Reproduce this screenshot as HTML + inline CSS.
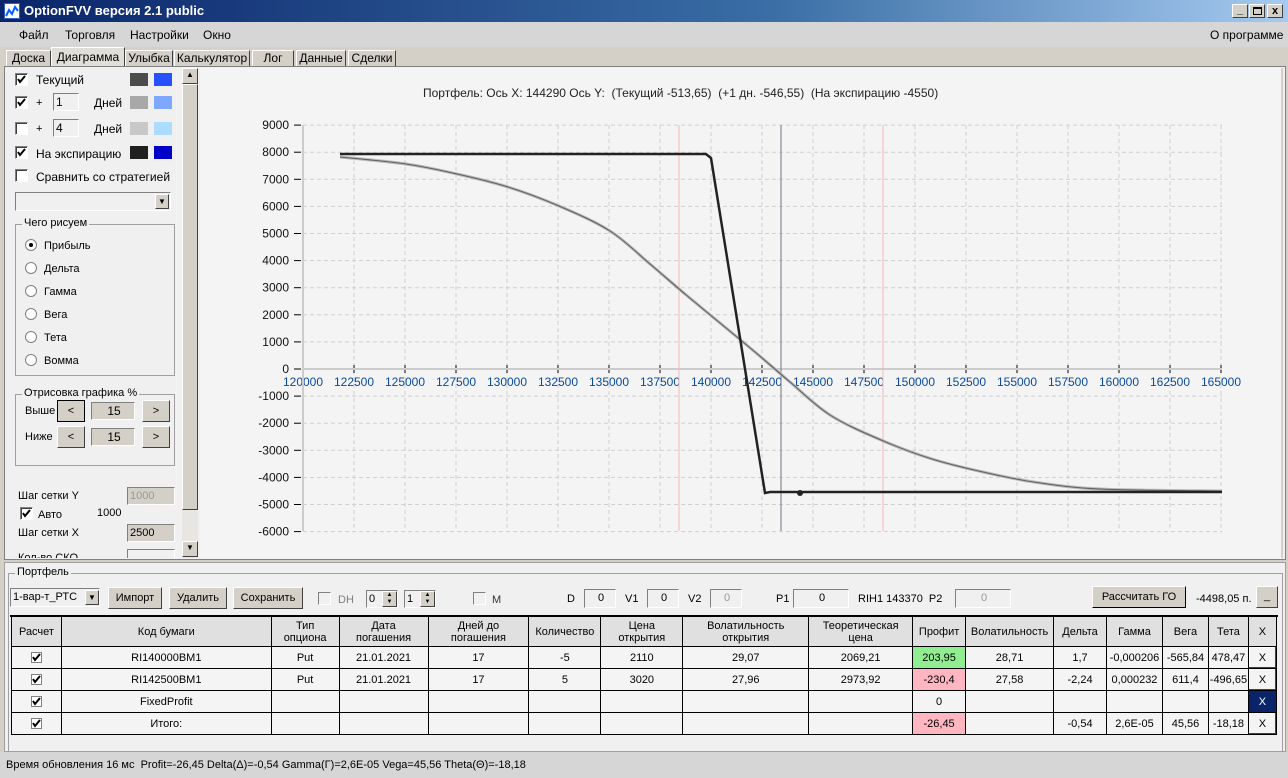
<!DOCTYPE html>
<html><head><meta charset="utf-8">
<style>
*{box-sizing:border-box;margin:0;padding:0}
body{width:1288px;height:778px;overflow:hidden;background:#d4d0c8;font-family:"Liberation Sans",sans-serif;font-size:11px;color:#000;position:relative}
.a{position:absolute}
.title{left:0;top:0;width:1288px;height:22px;background:linear-gradient(90deg,#0a246a,#3a6ea5 60%,#a6caf0);color:#fff;font-weight:bold;font-size:13px;line-height:22px;padding-left:24px}
.menu{left:0;top:22px;width:1288px;height:25px;background:#d6d6d6}
.menu span{position:absolute;top:6px;font-size:12px}
.tab{position:absolute;top:50px;height:17px;background:#d4d0c8;border:1px solid #fff;border-right-color:#404040;border-bottom:none;font-size:12px;text-align:center;line-height:15px}
.btn{position:absolute;background:#d4d0c8;border:1px solid;border-color:#fff #404040 #404040 #fff;text-align:center;font-size:11px}
.inp{position:absolute;background:#f0f0f0;border:1px solid;border-color:#808080 #fff #fff #808080;font-size:11px;padding-left:2px;line-height:16px}
.cb{position:absolute;width:13px;height:13px;background:#fff;border:1px solid;border-color:#808080 #fff #fff #808080;box-shadow:inset 1px 1px #404040}
.cb svg{position:absolute;left:1px;top:1px}
.rd{position:absolute;width:12px;height:12px;border-radius:50%;background:#fff;border:1px solid #808080}
.sw{position:absolute;width:18px;height:13px}
.grp{position:absolute;border:1px solid #a0a0a0}
.grp>b{position:absolute;top:-8px;left:6px;background:#f0f0f0;font-weight:normal;padding:0 2px}
table{border-collapse:collapse;font-size:11px}
td{border:1px solid #000;text-align:center;height:22px;padding:0}
.tc{display:inline-block;width:11px;height:11px;border:1px solid #808080;background:#fff;vertical-align:middle;position:relative}
</style></head><body>
<div class="a title">OptionFVV версия 2.1 public</div>
<div class="a" style="left:4px;top:3px;width:16px;height:16px;background:#fff;border:1px solid #3060c0"><svg width="14" height="14"><polyline points="1,12 4,6 7,10 10,3 13,7" fill="none" stroke="#0060ff" stroke-width="2"/></svg></div>
<div class="btn" style="left:1232px;top:4px;width:16px;height:14px;line-height:10px;font-weight:bold">_</div>
<div class="btn" style="left:1249px;top:4px;width:16px;height:14px"><div class="a" style="left:3px;top:2px;width:9px;height:8px;border:1px solid #000;border-top-width:2px"></div></div>
<div class="btn" style="left:1267px;top:4px;width:16px;height:14px;font-weight:bold;line-height:12px">x</div>
<div class="a menu"><span style="left:19px">Файл</span><span style="left:65px">Торговля</span><span style="left:130px">Настройки</span><span style="left:203px">Окно</span><span style="left:1210px">О программе</span></div>
<div class="tab" style="left:6px;width:45px">Доска</div>
<div class="tab" style="left:51px;top:47px;height:20px;width:74px;background:#e0ded8;line-height:18px">Диаграмма</div>
<div class="tab" style="left:125px;width:48px">Улыбка</div>
<div class="tab" style="left:174px;width:76px">Калькулятор</div>
<div class="tab" style="left:252px;width:42px">Лог</div>
<div class="tab" style="left:296px;width:50px">Данные</div>
<div class="tab" style="left:348px;width:48px">Сделки</div>
<div class="a" style="left:4px;top:66px;width:1282px;height:494px;background:#f0f0f0;border:1px solid #808080"></div>
<div class="a" style="left:9px;top:68px;width:173px;height:490px;background:#f0f0f0"></div>
<div class="a" style="left:182px;top:68px;width:16px;height:490px;background:#e8e6e0"></div>
<div class="btn" style="left:182px;top:68px;width:16px;height:16px;font-size:8px;line-height:12px">▲</div>
<div class="a" style="left:182px;top:84px;width:16px;height:426px;background:#d4d0c8;border:1px solid;border-color:#fff #404040 #404040 #fff"></div>
<div class="btn" style="left:182px;top:541px;width:16px;height:16px;font-size:8px;line-height:12px">▼</div>
<div class="cb" style="left:15px;top:73px"><svg width="9" height="9"><polyline points="1,4 3,7 8,1" fill="none" stroke="#000" stroke-width="2"/></svg></div><div class="a" style="left:36px;top:73px;font-size:12px">Текущий</div>
<div class="sw" style="left:130px;top:73px;background:#4c4c4c"></div><div class="sw" style="left:154px;top:73px;background:#2850ff"></div>
<div class="cb" style="left:15px;top:96px"><svg width="9" height="9"><polyline points="1,4 3,7 8,1" fill="none" stroke="#000" stroke-width="2"/></svg></div><div class="a" style="left:36px;top:97px">+</div><div class="inp" style="left:53px;top:93px;width:26px;height:18px;font-size:12px">1</div><div class="a" style="left:94px;top:96px;font-size:12px">Дней</div>
<div class="sw" style="left:130px;top:96px;background:#a8a8a8"></div><div class="sw" style="left:154px;top:96px;background:#7ea8ff"></div>
<div class="cb" style="left:15px;top:122px"></div><div class="a" style="left:36px;top:123px">+</div><div class="inp" style="left:53px;top:119px;width:26px;height:18px;font-size:12px">4</div><div class="a" style="left:94px;top:122px;font-size:12px">Дней</div>
<div class="sw" style="left:130px;top:122px;background:#c8c8c8"></div><div class="sw" style="left:154px;top:122px;background:#acdcff"></div>
<div class="cb" style="left:15px;top:146px"><svg width="9" height="9"><polyline points="1,4 3,7 8,1" fill="none" stroke="#000" stroke-width="2"/></svg></div><div class="a" style="left:36px;top:147px;font-size:12px">На экспирацию</div>
<div class="sw" style="left:130px;top:146px;background:#202020"></div><div class="sw" style="left:154px;top:146px;background:#0000c8"></div>
<div class="cb" style="left:15px;top:169px"></div><div class="a" style="left:36px;top:170px;font-size:12px">Сравнить со стратегией</div>
<div class="inp" style="left:15px;top:192px;width:156px;height:19px;background:#f0f0f0"></div><div class="btn" style="left:155px;top:194px;width:14px;height:15px;font-size:8px;line-height:13px">▼</div>
<div class="grp" style="left:15px;top:224px;width:160px;height:152px"><b>Чего рисуем</b></div>
<div class="rd" style="left:25px;top:239px"><div class="a" style="left:3px;top:3px;width:4px;height:4px;background:#000;border-radius:50%"></div></div><div class="a" style="left:44px;top:240px">Прибыль</div>
<div class="rd" style="left:25px;top:262px"></div><div class="a" style="left:44px;top:263px">Дельта</div>
<div class="rd" style="left:25px;top:285px"></div><div class="a" style="left:44px;top:286px">Гамма</div>
<div class="rd" style="left:25px;top:308px"></div><div class="a" style="left:44px;top:309px">Вега</div>
<div class="rd" style="left:25px;top:331px"></div><div class="a" style="left:44px;top:332px">Тета</div>
<div class="rd" style="left:25px;top:354px"></div><div class="a" style="left:44px;top:355px">Вомма</div>
<div class="grp" style="left:15px;top:394px;width:160px;height:72px"><b>Отрисовка графика %</b></div>
<div class="a" style="left:25px;top:405px">Выше</div><div class="btn" style="left:57px;top:400px;width:28px;height:22px;line-height:20px;border-color:#000">&lt;</div><div class="inp" style="left:91px;top:402px;width:44px;height:18px;background:#d4d0c8;text-align:center;font-size:12px">15</div><div class="btn" style="left:142px;top:400px;width:28px;height:22px;line-height:20px">&gt;</div>
<div class="a" style="left:25px;top:431px">Ниже</div><div class="btn" style="left:57px;top:426px;width:28px;height:22px;line-height:20px">&lt;</div><div class="inp" style="left:91px;top:428px;width:44px;height:18px;background:#d4d0c8;text-align:center;font-size:12px">15</div><div class="btn" style="left:142px;top:426px;width:28px;height:22px;line-height:20px">&gt;</div>
<div class="a" style="left:18px;top:490px">Шаг сетки Y</div><div class="inp" style="left:127px;top:487px;width:48px;height:18px;background:#d4d0c8;color:#999">1000</div>
<div class="cb" style="left:20px;top:507px"><svg width="9" height="9"><polyline points="1,4 3,7 8,1" fill="none" stroke="#000" stroke-width="2"/></svg></div><div class="a" style="left:38px;top:509px">Авто</div><div class="a" style="left:97px;top:507px">1000</div>
<div class="a" style="left:18px;top:527px">Шаг сетки X</div><div class="inp" style="left:127px;top:524px;width:48px;height:18px;background:#d4d0c8">2500</div>
<div class="a" style="left:18px;top:552px;height:6px;overflow:hidden">Кол-во СКО</div><div class="inp" style="left:127px;top:549px;width:48px;height:9px;background:#f0f0f0;border-bottom:none"></div>
<div class="a" style="left:200px;top:68px;width:1083px;height:490px;background:#f4f4f4;border-right:2px solid #d4d0c8"></div>
<div class="a" style="left:423px;top:86px;font-size:12px;color:#222">Портфель: Ось X: 144290 Ось Y:&nbsp; (Текущий -513,65)&nbsp; (+1 дн. -546,55)&nbsp; (На экспирацию -4550)</div>
<svg class="a" id="ch" style="left:0;top:0" width="1288" height="560"></svg>
<div class="a" style="left:4px;top:562px;width:1282px;height:190px;background:#f0f0f0;border:1px solid #a0a0a0"></div>
<div class="grp" style="left:8px;top:573px;width:1275px;height:178px;border-bottom:none"><b style="background:#f0f0f0">Портфель</b></div>
<div class="inp" style="left:10px;top:588px;width:90px;height:19px;background:#f0f0f0;font-size:11px">1-вар-т_РТС</div><div class="btn" style="left:85px;top:590px;width:14px;height:15px;font-size:8px;line-height:13px">▼</div>
<div class="btn" style="left:108px;top:587px;width:54px;height:22px;line-height:20px">Импорт</div>
<div class="btn" style="left:169px;top:587px;width:58px;height:22px;line-height:20px">Удалить</div>
<div class="btn" style="left:233px;top:587px;width:70px;height:22px;line-height:20px">Сохранить</div>
<div class="cb" style="left:318px;top:592px;background:#f0f0f0;box-shadow:none"></div><div class="a" style="left:338px;top:594px;color:#808080">DH</div>
<div class="inp" style="left:366px;top:590px;width:32px;height:18px">0</div><div class="btn" style="left:382px;top:591px;width:15px;height:16px;font-size:6px;line-height:7px">▲<br>▼</div>
<div class="inp" style="left:404px;top:590px;width:32px;height:18px">1</div><div class="btn" style="left:420px;top:591px;width:15px;height:16px;font-size:6px;line-height:7px">▲<br>▼</div>
<div class="cb" style="left:473px;top:592px;background:#f0f0f0;box-shadow:none"></div><div class="a" style="left:492px;top:594px;color:#333">M</div>
<div class="a" style="left:567px;top:593px">D</div><div class="inp" style="left:584px;top:589px;width:32px;height:19px;text-align:center">0</div>
<div class="a" style="left:625px;top:593px">V1</div><div class="inp" style="left:647px;top:589px;width:32px;height:19px;text-align:center">0</div>
<div class="a" style="left:688px;top:593px">V2</div><div class="inp" style="left:710px;top:589px;width:32px;height:19px;text-align:center;color:#999">0</div>
<div class="a" style="left:776px;top:593px">P1</div><div class="inp" style="left:793px;top:589px;width:56px;height:19px;text-align:center">0</div>
<div class="a" style="left:858px;top:593px">RIH1 143370&nbsp; P2</div><div class="inp" style="left:955px;top:589px;width:56px;height:19px;text-align:center;color:#999">0</div>
<div class="btn" style="left:1092px;top:586px;width:94px;height:22px;line-height:20px;border-color:#fff #000 #000 #fff">Рассчитать ГО</div>
<div class="a" style="left:1196px;top:593px">-4498,05 п.</div>
<div class="btn" style="left:1256px;top:586px;width:22px;height:22px;line-height:18px">_</div>
<div class="a" style="left:10px;top:615px;width:1268px;height:2px;background:#000"></div>
<table class="a" style="left:11px;top:616px;width:1266px;background:#f4f4f4">
<colgroup><col style="width:50px"><col style="width:210px"><col style="width:68px"><col style="width:89px"><col style="width:101px"><col style="width:72px"><col style="width:82px"><col style="width:126px"><col style="width:104px"><col style="width:53px"><col style="width:88px"><col style="width:53px"><col style="width:56px"><col style="width:46px"><col style="width:40px"><col style="width:28px"></colgroup>
<tr style="background:#e0e0e0"><td style="height:30px">Расчет</td><td>Код бумаги</td><td>Тип<br>опциона</td><td>Дата<br>погашения</td><td>Дней до<br>погашения</td><td>Количество</td><td>Цена<br>открытия</td><td>Волатильность<br>открытия</td><td>Теоретическая<br>цена</td><td>Профит</td><td>Волатильность</td><td>Дельта</td><td>Гамма</td><td>Вега</td><td>Тета</td><td>X</td></tr>
<tr><td><span class="tc"><svg class="a" style="left:0;top:0" width="9" height="9"><polyline points="1,4 3,7 8,1" fill="none" stroke="#000" stroke-width="2"/></svg></span></td><td>RI140000BM1</td><td>Put</td><td>21.01.2021</td><td>17</td><td>-5</td><td>2110</td><td>29,07</td><td>2069,21</td><td style="background:#90ee90">203,95</td><td>28,71</td><td>1,7</td><td>-0,000206</td><td>-565,84</td><td>478,47</td><td style="box-shadow:inset -1px -1px #404040,inset 1px 1px #fff">X</td></tr>
<tr><td><span class="tc"><svg class="a" style="left:0;top:0" width="9" height="9"><polyline points="1,4 3,7 8,1" fill="none" stroke="#000" stroke-width="2"/></svg></span></td><td>RI142500BM1</td><td>Put</td><td>21.01.2021</td><td>17</td><td>5</td><td>3020</td><td>27,96</td><td>2973,92</td><td style="background:#ffb6c1">-230,4</td><td>27,58</td><td>-2,24</td><td>0,000232</td><td>611,4</td><td>-496,65</td><td style="box-shadow:inset -1px -1px #404040">X</td></tr>
<tr><td><span class="tc"><svg class="a" style="left:0;top:0" width="9" height="9"><polyline points="1,4 3,7 8,1" fill="none" stroke="#000" stroke-width="2"/></svg></span></td><td>FixedProfit</td><td></td><td></td><td></td><td></td><td></td><td></td><td></td><td>0</td><td></td><td></td><td></td><td></td><td></td><td style="background:#0a246a;color:#fff">X</td></tr>
<tr><td><span class="tc"><svg class="a" style="left:0;top:0" width="9" height="9"><polyline points="1,4 3,7 8,1" fill="none" stroke="#000" stroke-width="2"/></svg></span></td><td>Итого:</td><td></td><td></td><td></td><td></td><td></td><td></td><td></td><td style="background:#ffb6c1">-26,45</td><td></td><td>-0,54</td><td>2,6E-05</td><td>45,56</td><td>-18,18</td><td style="box-shadow:inset -1px -1px #404040">X</td></tr>
</table>
<div class="a" style="left:0;top:752px;width:1288px;height:26px;background:#d6d6d6"></div>
<div class="a" style="left:6px;top:759px">Время обновления 16 мс&nbsp; Profit=-26,45 Delta(Δ)=-0,54 Gamma(Γ)=2,6E-05 Vega=45,56 Theta(Θ)=-18,18</div>
<script>
var s='',X0=303,XS=51/2500,Y0=369,YS=0.0271;
function xv(v){return X0+(v-120000)*XS}function yv(p){return Y0-p*YS}
for(var p=-6000;p<=9000;p+=1000){var y=yv(p).toFixed(1);s+='<line x1="303" y1="'+y+'" x2="1222" y2="'+y+'" stroke="#d0d0d0" stroke-dasharray="4,3"/>';
s+='<line x1="294" y1="'+y+'" x2="301" y2="'+y+'" stroke="#000"/><text x="289" y="'+(+y+4)+'" text-anchor="end" font-size="12" fill="#111" font-family="Liberation Sans">'+p+'</text>';}
for(var v=120000;v<=165000;v+=2500){var x=xv(v).toFixed(1);s+='<line x1="'+x+'" y1="125" x2="'+x+'" y2="531" stroke="#d0d0d0" stroke-dasharray="4,3"/>';
s+='<line x1="'+x+'" y1="365" x2="'+x+'" y2="373" stroke="#000"/><text x="'+x+'" y="386" text-anchor="middle" font-size="12" fill="#0a4a9a" font-family="Liberation Sans">'+v+'</text>';}
s+='<line x1="303" y1="125" x2="303" y2="531" stroke="#ccc" stroke-width="2"/><line x1="303" y1="369" x2="1222" y2="369" stroke="#ccc" stroke-width="2"/>';
s+='<line x1="679" y1="125" x2="679" y2="531" stroke="#f4b8b8"/><line x1="883" y1="125" x2="883" y2="531" stroke="#f4b8b8"/><line x1="781" y1="125" x2="781" y2="531" stroke="#707880"/>';
var L=[[340,157],[406,164],[457,174],[508,187],[559,206],[610,231],[650,264],[685,294],[720,323]],P=[];
L.forEach(function(q){P.push(q)});for(var i=L.length-2;i>=0;i--)P.push([1440-L[i][0],646-L[i][1]]);P.push([1222,491]);
var d='M'+P[0][0]+','+P[0][1];
for(var i=0;i<P.length-1;i++){var p0=P[Math.max(0,i-1)],p1=P[i],p2=P[i+1],p3=P[Math.min(P.length-1,i+2)];
d+=' C'+(p1[0]+(p2[0]-p0[0])/6).toFixed(1)+','+(p1[1]+(p2[1]-p0[1])/6).toFixed(1)+' '+(p2[0]-(p3[0]-p1[0])/6).toFixed(1)+','+(p2[1]-(p3[1]-p1[1])/6).toFixed(1)+' '+p2[0]+','+p2[1];}
s+='<path d="'+d+'" fill="none" stroke="#b8b8b8" stroke-width="3"/><path d="'+d+'" fill="none" stroke="#606060" stroke-width="1"/>';
s+='<polyline points="340,154 706,154 711,158 765,493 770,492 1222,492" fill="none" stroke="#222" stroke-width="2.5"/><circle cx="800" cy="493" r="3" fill="#222"/>';
document.getElementById('ch').innerHTML=s;
</script>
</body></html>
